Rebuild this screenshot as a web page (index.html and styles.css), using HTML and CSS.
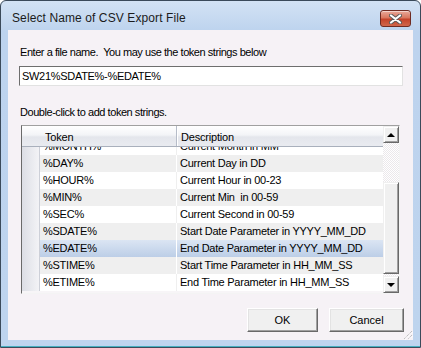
FILE: index.html
```html
<!DOCTYPE html>
<html lang="en">
<head>
    <meta charset="UTF-8">
    <title>Select Name of CSV Export File</title>
    <link rel="stylesheet" href="styles.css">
</head>
<body>
<div class="window">
    <div class="titlebar">
        <span class="title">Select Name of CSV Export File</span>
        <button class="close" aria-label="Close">
            <svg width="13" height="10" viewBox="0 0 13 10">
                <path d="M2 1.5 L11 8.5 M11 1.5 L2 8.5" stroke="#5a5a5a" stroke-width="4" stroke-linecap="round"/>
                <path d="M2 1.5 L11 8.5 M11 1.5 L2 8.5" stroke="#fff" stroke-width="2.2" stroke-linecap="round"/>
            </svg>
        </button>
    </div>
    <div class="client">
        <p class="label first">Enter a file name.  You may use the token strings below</p>
        <input class="filename" type="text" value="SW21%SDATE%-%EDATE%">
        <p class="label second">Double-click to add token strings.</p>

        <div class="grid">
            <div class="grid-main">
                <div class="grid-head">
                    <div class="hcell token">Token</div>
                    <div class="hcell desc">Description</div>
                </div>
                <div class="grid-body">
                    <div class="rows">
                        <div class="row"><div class="rh"></div><div class="cell token">%MONTH%</div><div class="cell desc">Current Month in MM</div></div>
                        <div class="row alt"><div class="rh"></div><div class="cell token">%DAY%</div><div class="cell desc">Current Day in DD</div></div>
                        <div class="row"><div class="rh"></div><div class="cell token">%HOUR%</div><div class="cell desc">Current Hour in 00-23</div></div>
                        <div class="row alt"><div class="rh"></div><div class="cell token">%MIN%</div><div class="cell desc">Current Min  in 00-59</div></div>
                        <div class="row"><div class="rh"></div><div class="cell token">%SEC%</div><div class="cell desc">Current Second in 00-59</div></div>
                        <div class="row alt"><div class="rh"></div><div class="cell token">%SDATE%</div><div class="cell desc">Start Date Parameter in YYYY_MM_DD</div></div>
                        <div class="row selected"><div class="rh"></div><div class="cell token">%EDATE%</div><div class="cell desc">End Date Parameter in YYYY_MM_DD</div></div>
                        <div class="row alt"><div class="rh"></div><div class="cell token">%STIME%</div><div class="cell desc">Start Time Parameter in HH_MM_SS</div></div>
                        <div class="row"><div class="rh"></div><div class="cell token">%ETIME%</div><div class="cell desc">End Time Parameter in HH_MM_SS</div></div>
                    </div>
                </div>
            </div>
            <div class="vscroll">
                <div class="sb-btn"><span class="arrow up"></span></div>
                <div class="sb-track">
                    <div class="sb-thumb"></div>
                </div>
                <div class="sb-btn"><span class="arrow down"></span></div>
            </div>
        </div>

        <div class="buttons">
            <button class="btn ok">OK</button>
            <button class="btn cancel">Cancel</button>
        </div>

        <svg class="grip" width="12" height="12" viewBox="0 0 12 12">
            <path d="M11 3 L3 11 M11 7 L7 11" stroke="#a8a8a8" stroke-width="1" stroke-dasharray="1 1"/>
            <path d="M12 4 L4 12 M12 8 L8 12" stroke="#fff" stroke-width="1" stroke-dasharray="1 1"/>
        </svg>
    </div>
</div>
</body>
</html>
```
FILE: styles.css
```css
body{
    margin: 0;
    background: #fff;
}
.window{
    box-sizing: border-box;
    width: 421px;
    height: 348px;
    border: 1px solid #3b4a5a;
    border-radius: 6px 6px 0 0;
    background: linear-gradient(#d3e2f4 0, #bdd3ee 30px, #bed4ee);
    padding: 0 7px 7px 7px;
    box-shadow: inset 0 -1px 0 #46aebf;
    display: flex;
    flex-direction: column;
    font-family: "Liberation Sans", Arial, sans-serif;
    font-size: 11px;
    color: #000;
}

.titlebar{
    height: 29px;
    display: flex;
    align-items: flex-start;
}
.title{
    margin: 10px 0 0 4px;
    font-size: 12px;
    line-height: 15px;
    color: #1b1b1b;
    letter-spacing: 0.1px;
}
.close{
    margin: 9px 2px 0 auto;
    width: 31px;
    height: 17px;
    padding: 0;
    border: 1px solid #6f2b22;
    border-radius: 3px;
    background: linear-gradient(#e9a99a 0, #d9775f 45%, #c4432a 55%, #d0674c);
    box-shadow: inset 0 1px 0 rgba(255,255,255,0.5);
    display: flex;
    align-items: center;
    justify-content: center;
}
.close svg{
    display: block;
}

.client{
    position: relative;
    height: 310px;
    background: #f6f2f6;
    display: flex;
    flex-direction: column;
    padding: 0 0 0 11px;
}

.label{
    margin: 0 0 0 1px;
    line-height: 13px;
    white-space: pre;
    letter-spacing: -0.45px;
}
.label.first{
    margin-top: 16px;
}
.label.second{
    margin-top: 20px;
}

.filename{
    box-sizing: border-box;
    margin: 7px 0 0 0;
    width: 384px;
    height: 20px;
    padding: 0 0 0 2px;
    border: 1px solid;
    border-color: #6e6e6e #e2e2e2 #e2e2e2 #6e6e6e;
    background: #fff;
    font-family: "Liberation Sans", Arial, sans-serif;
    font-size: 11px;
    letter-spacing: -0.3px;
    color: #000;
    outline: none;
}

/* data grid */
.grid{
    box-sizing: border-box;
    margin: 6px 0 0 2px;
    width: 379px;
    height: 169px;
    border: 1px solid;
    border-color: #a0a0a0 #f4f4f4 #f4f4f4 #6a6a6a;
    display: flex;
    background: #fff;
}
.grid-main{
    width: 361px;
    display: flex;
    flex-direction: column;
}
.grid-head{
    display: flex;
    height: 21px;
    box-sizing: border-box;
    border-bottom: 1px solid #a9b0bc;
    background: linear-gradient(#ffffff 0, #f3f4f7 45%, #e4e6ec 55%, #e9ebf0);
}
.hcell{
    box-sizing: border-box;
    line-height: 20px;
    padding-top: 1px;
    white-space: pre;
    letter-spacing: -0.2px;
}
.hcell.token{
    width: 155px;
    padding-left: 23px;
    border-right: 1px solid #b6bcc8;
}
.hcell.desc{
    flex: 1;
    padding-left: 3px;
    border-left: 1px solid #fff;
}

.grid-body{
    flex: 1;
    overflow: hidden;
    background: #f7f5f7;
}
.rows{
    margin-top: -9px;
}
.row{
    display: flex;
    height: 17px;
    background: #fff;
}
.row.alt{
    background: #efefef;
}
.row.selected{
    background: linear-gradient(#dbe5f3, #bccee7);
}
.rh{
    box-sizing: border-box;
    width: 18px;
    border-right: 1px solid #cdd0d8;
    background: linear-gradient(to right, #dcdee5, #f3f3f6);
}
.cell{
    box-sizing: border-box;
    line-height: 17px;
    padding-left: 3px;
    white-space: pre;
    letter-spacing: -0.25px;
}
.cell.token{
    width: 137px;
    border-right: 1px solid #efefef;
}
.row.alt .cell.token,
.row.selected .cell.token{
    border-right-color: #fff;
}
.cell.desc{
    flex: 1;
}

/* scrollbar */
.vscroll{
    width: 16px;
    display: flex;
    flex-direction: column;
}
.sb-btn,
.sb-thumb{
    box-sizing: border-box;
    background: #f0f0f0;
    border: 1px solid;
    border-color: #f0f0f0 #696969 #696969 #f0f0f0;
    box-shadow: inset 1px 1px 0 #fff, inset -1px -1px 0 #a0a0a0;
}
.sb-btn{
    height: 17px;
    display: flex;
    align-items: center;
    justify-content: center;
}
.arrow{
    width: 0;
    height: 0;
    border-left: 4px solid transparent;
    border-right: 4px solid transparent;
}
.arrow.up{
    border-bottom: 4px solid #000;
}
.arrow.down{
    border-top: 4px solid #000;
}
.sb-track{
    flex: 1;
    background: repeating-conic-gradient(#fff 0 25%, #ebe8eb 0 50%) 0 0 / 2px 2px;
    padding-top: 39px;
    padding-bottom: 2px;
    display: flex;
    flex-direction: column;
}
.sb-thumb{
    flex: 1;
}

/* dialog buttons */
.buttons{
    display: flex;
    justify-content: flex-end;
    gap: 11px;
    margin: 14px 9px 0 0;
}
.btn{
    box-sizing: border-box;
    height: 24px;
    padding: 0;
    background: #f0f0f0;
    border: 1px solid;
    border-color: #fff #696969 #696969 #fff;
    box-shadow: inset -1px -1px 0 #a0a0a0, inset 1px 1px 0 #e3e3e3;
    font-family: "Liberation Sans", Arial, sans-serif;
    font-size: 11px;
    color: #000;
}
.btn.ok{
    width: 71px;
}
.btn.cancel{
    width: 75px;
}

.grip{
    position: absolute;
    right: 0;
    bottom: 0;
}
```
